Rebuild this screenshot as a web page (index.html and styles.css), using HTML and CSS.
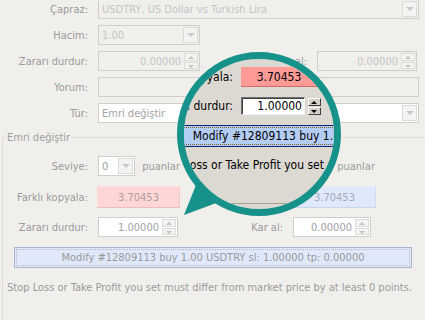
FILE: index.html
```html
<!DOCTYPE html>
<html lang="tr">
<head>
    <meta charset="UTF-8">
    <meta name="viewport" content="width=device-width, initial-scale=1.0">
    <title>Emri değiştir</title>
    <link rel="stylesheet" href="styles.css">
</head>
<body>
    <div class="dialog">
        <div class="top">
            <div class="row">
                <span class="lbl">Çapraz:</span>
                <div class="combo w-full">USDTRY, US Dollar vs Turkish Lira<span class="drop"></span></div>
            </div>
            <div class="row">
                <span class="lbl">Hacim:</span>
                <div class="combo w-small">1.00<span class="drop"></span></div>
            </div>
            <div class="row">
                <span class="lbl">Zararı durdur:</span>
                <div class="spin w-small">0.00000<span class="btns"><span class="up"></span><span class="down"></span></span></div>
                <span class="rlbl">Kar al:</span>
                <div class="spin w-right">0.00000<span class="btns"><span class="up"></span><span class="down"></span></span></div>
            </div>
            <div class="row">
                <span class="lbl">Yorum:</span>
                <div class="edit w-full"></div>
            </div>
            <div class="row">
                <span class="lbl">Tür:</span>
                <div class="combo enabled w-full">Emri değiştir<span class="drop"></span></div>
            </div>
        </div>

        <fieldset class="group">
            <legend>Emri değiştir</legend>
            <div class="grow seviye">
                <span class="glbl">Seviye:</span>
                <div class="cell">
                    <div class="combo enabled w-pts">0<span class="drop"></span></div>
                    <span class="unit">puanlar</span>
                </div>
                <span></span>
                <div class="cell">
                    <div class="combo enabled w-pts2">0<span class="drop"></span></div>
                    <span class="unit unit-r">puanlar</span>
                </div>
            </div>
            <div class="grow kopya">
                <span class="glbl">Farklı kopyala:</span>
                <div class="price sell">3.70453</div>
                <span></span>
                <div class="price buy">3.70453</div>
            </div>
            <div class="grow stops">
                <span class="glbl">Zararı durdur:</span>
                <div class="spin enabled w-sl">1.00000<span class="btns"><span class="up"></span><span class="down"></span></span></div>
                <span class="glbl">Kar al:</span>
                <div class="spin enabled w-tp">0.00000<span class="btns"><span class="up"></span><span class="down"></span></span></div>
            </div>
            <div class="modify"><span>Modify #12809113 buy 1.00 USDTRY sl: 1.00000 tp: 0.00000</span></div>
            <div class="note">Stop Loss or Take Profit you set must differ from market price by at least 0 points.</div>
        </fieldset>

        <!-- büyüteç -->
        <svg class="tail" width="425" height="320" viewBox="0 0 425 320">
            <polygon points="198,180 184,215 219,202 214,188" fill="#16928a"/>
        </svg>
        <div class="lens">
            <div class="lens-inner">
                <div class="mrow m1">
                    <span class="mlbl">Farklı kopyala:</span>
                    <div class="mprice">3.70453</div>
                </div>
                <div class="mrow m2">
                    <span class="mlbl">Zararı durdur:</span>
                    <div class="medit">1.00000</div>
                    <span class="mbtns"><span class="up"></span><span class="down"></span></span>
                </div>
                <div class="mmodify"><span>Modify #12809113 buy 1.00 USDTRY sl: 1.00000 tp: 0.00000</span></div>
                <div class="mnote">Stop Loss or Take Profit you set must differ from market price by at least 0 points.</div>
                <div class="mline"></div>
            </div>
        </div>
    </div>
</body>
</html>
```

FILE: styles.css
```css
body {
    margin: 0;
    background-color: #f0efeb;
    font-family: "DejaVu Sans Condensed", "Liberation Sans", sans-serif;
    font-size: 11px;
    color: #9b9b9b;
    overflow: hidden;
}
.dialog {
    position: relative;
    width: 425px;
    height: 320px;
    overflow: hidden;
}
.top {
    margin-top: -1px;
}
.row {
    display: flex;
    align-items: center;
    height: 20px;
    margin-bottom: 6px;
}
.row:last-child {
    margin-bottom: 0;
}
.lbl {
    width: 88px;
    margin-right: 10px;
    text-align: right;
    white-space: nowrap;
}
.rlbl {
    width: 107px;
    margin-right: 10px;
    text-align: right;
}
.w-full { width: 321px; }
.w-small { width: 102px; }
.w-right { width: 100px; }
.w-pts { width: 52px; }
.w-pts2 { width: 50px; }
.w-sl { width: 80px; }
.w-tp { width: 78px; }

.combo, .spin, .edit {
    position: relative;
    box-sizing: border-box;
    height: 20px;
    border: 1px solid #d0cfcb;
    background: #f0efeb;
    color: #c5c5c5;
    display: flex;
    align-items: center;
    white-space: nowrap;
}
.combo {
    padding-left: 3px;
}
.combo.enabled, .spin.enabled {
    background: #fff;
    color: #a2a2a2;
}
.drop {
    position: absolute;
    right: 1px;
    top: 1px;
    width: 15px;
    height: 16px;
    box-sizing: border-box;
    border: 1px solid #dcdbd8;
    background: #f4f3f1;
}
.drop::after {
    content: "";
    position: absolute;
    left: 3px;
    top: 5px;
    border-left: 4px solid transparent;
    border-right: 4px solid transparent;
    border-top: 4px solid #c9c9c9;
}
.spin {
    justify-content: flex-end;
    padding-right: 18px;
}
.btns {
    position: absolute;
    right: 1px;
    top: 1px;
    bottom: 1px;
    width: 14px;
    display: flex;
    flex-direction: column;
    gap: 1px;
}
.btns span, .mbtns span {
    position: relative;
    flex: 1;
    box-sizing: border-box;
    border: 1px solid #dcdbd8;
    background: #f4f3f1;
}
.btns span::after, .mbtns span::after {
    content: "";
    position: absolute;
    left: 3px;
    border-left: 3px solid transparent;
    border-right: 3px solid transparent;
}
.btns .up::after {
    top: 2px;
    border-bottom: 3px solid #c4c4c4;
}
.btns .down::after {
    top: 2px;
    border-top: 3px solid #c4c4c4;
}

.group {
    margin: 8px -10px 0 2px;
    padding: 12px 0 40px 0;
    border: 1px solid #dcdad5;
    min-inline-size: auto;
}
.group legend {
    margin-left: 2px;
    padding: 0 2px;
    line-height: 13px;
    color: #a0a0a0;
}
.grow {
    display: grid;
    grid-template-columns: 95px 82px 113px 82px 1fr;
    align-items: center;
    white-space: nowrap;
}
.glbl {
    padding-right: 10px;
    text-align: right;
}
.cell {
    display: flex;
    align-items: center;
}
.seviye {
    height: 20px;
    margin-bottom: 10px;
}
.unit {
    margin-left: 7px;
}
.unit-r {
    margin-left: 16px;
}
.kopya {
    height: 22px;
    margin-bottom: 9px;
}
.price {
    box-sizing: border-box;
    height: 22px;
    width: 83px;
    display: flex;
    align-items: center;
    justify-content: center;
    border: 1px solid;
}
.price.sell {
    margin-left: -1px;
    background: #fdd6d6;
    border-color: #fbdcdc #f2c8c8 #eebdbd #fbdcdc;
    color: #b39c9c;
}
.price.buy {
    background: #dfe9fb;
    border-color: #e6eefb #cfdcf0 #c8d6ee #e6eefb;
    color: #a4aab4;
}
.stops {
    height: 20px;
    margin-bottom: 10px;
}
.modify {
    margin-left: 11px;
    width: 398px;
    height: 21px;
    box-sizing: border-box;
    border: 1px solid #a9b4d3;
    background: #dfe9fb;
    padding: 1px;
}
.modify span {
    display: flex;
    align-items: center;
    justify-content: center;
    height: 100%;
    box-sizing: border-box;
    border: 1px dotted #b8b8b8;
    color: #9a9a9a;
}
.note {
    margin: 13px 0 0 4px;
    line-height: 13px;
    white-space: nowrap;
}

.tail {
    position: absolute;
    left: 0;
    top: 0;
    z-index: 1;
}
.lens {
    position: absolute;
    left: 177px;
    top: 52px;
    width: 164px;
    height: 164px;
    box-sizing: border-box;
    border: 7px solid #16928a;
    border-radius: 50%;
    overflow: hidden;
    background: #dcd9d2;
    z-index: 2;
}
.lens-inner {
    position: absolute;
    left: -184px;
    top: -59px;
    width: 600px;
    color: #000;
    font-size: 12px;
    white-space: nowrap;
}
.mrow {
    display: flex;
    align-items: center;
}
.mlbl {
    width: 233px;
    margin-right: 8px;
    text-align: right;
}
.m1 {
    margin-top: 67px;
    height: 20px;
}
.mprice {
    box-sizing: border-box;
    width: 76px;
    height: 20px;
    display: flex;
    align-items: center;
    justify-content: center;
    background: #ff9a97;
    border-bottom: 1px solid #d86c6a;
}
.m2 {
    margin-top: 10px;
    height: 18px;
}
.medit {
    box-sizing: border-box;
    width: 64px;
    height: 18px;
    border: 1px solid #6f6f6f;
    border-right-color: #f4f4f4;
    border-bottom-color: #f4f4f4;
    box-shadow: inset 1px 1px 0 #404040;
    background: #fff;
    display: flex;
    align-items: center;
    justify-content: flex-end;
    padding-right: 2px;
}
.mbtns {
    margin-left: 3px;
    width: 13px;
    height: 17px;
    display: flex;
    flex-direction: column;
    gap: 1px;
}
.mbtns span {
    background: #d4d0c8;
    border-color: #fff #404040 #404040 #fff;
}
.mbtns span::after {
    left: 2px;
}
.mbtns .up::after {
    top: 2px;
    border-bottom: 3px solid #000;
}
.mbtns .down::after {
    top: 2px;
    border-top: 3px solid #000;
}
.mmodify {
    margin: 10px 0 0 159px;
    width: 398px;
    height: 22px;
    box-sizing: border-box;
    border-top: 1px solid #0a246a;
    border-bottom: 1px solid #0a246a;
    background: #b4cdf5;
    padding: 1px 0;
}
.mmodify span {
    display: flex;
    align-items: center;
    justify-content: center;
    height: 100%;
    box-sizing: border-box;
    border-top: 1px dotted #7d5c2a;
    border-bottom: 1px dotted #7d5c2a;
}
.mnote {
    margin: 11px 0 0 156px;
    line-height: 14px;
}
.mline {
    margin: 31px 0 0 215px;
    width: 90px;
    border-top: 1px solid #a3a09a;
}
```
